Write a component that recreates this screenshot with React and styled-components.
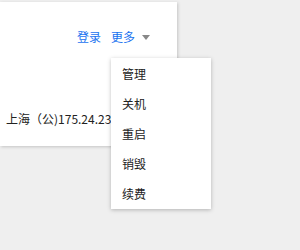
import React from 'react';
import styled, { createGlobalStyle } from 'styled-components';

const Global = createGlobalStyle`
  html, body { margin: 0; padding: 0; background: #efefef; }
  body { font-family: "Noto Sans CJK SC", "Liberation Sans", sans-serif; font-size: 12px; color: #222; }
`;

const Page = styled.div`
  width: 300px;
  height: 250px;
  padding-top: 2px;
  box-sizing: border-box;
`;

const Card = styled.div`
  width: 177px;
  height: 144px;
  background: #fff;
  box-shadow: 1px 1px 3px rgba(0,0,0,0.18);
  box-sizing: border-box;
  padding: 27px 27px 0 6px;
  display: flex;
  flex-direction: column;
`;

const Header = styled.div`
  display: flex;
  justify-content: flex-end;
  align-items: center;
  gap: 10px;
  height: 16px;
  line-height: 16px;
`;

const Link = styled.a`
  color: #1a73f0;
  text-decoration: none;
  cursor: pointer;
`;

const More = styled.div`
  position: relative;
  display: flex;
  align-items: center;
  gap: 7px;
`;

const Caret = styled.span`
  width: 0;
  height: 0;
  border-left: 4px solid transparent;
  border-right: 4px solid transparent;
  border-top: 5px solid #888;
  margin-top: 1px;
`;

const Menu = styled.ul`
  position: absolute;
  top: 29px;
  left: 0;
  width: 100px;
  margin: 0;
  padding: 0;
  list-style: none;
  background: #fff;
  box-shadow: 0 1px 4px rgba(0,0,0,0.25);
  z-index: 2;
`;

const Item = styled.li`
  height: 30px;
  line-height: 30px;
  padding-left: 11px;
  color: #222;
  white-space: nowrap;
  &:first-child { margin-top: 1px; }
`;

const Ip = styled.div`
  margin-top: 66px;
  line-height: 16px;
  white-space: nowrap;
`;

export default function App() {
  const items = ['管理', '关机', '重启', '销毁', '续费'];
  return (
    <Page>
      <Global />
      <Card>
        <Header>
          <Link>登录</Link>
          <More>
            <Link>更多</Link>
            <Caret />
            <Menu>
              {items.map(t => <Item key={t}>{t}</Item>)}
            </Menu>
          </More>
        </Header>
        <Ip>上海（公)175.24.23</Ip>
      </Card>
    </Page>
  );
}
